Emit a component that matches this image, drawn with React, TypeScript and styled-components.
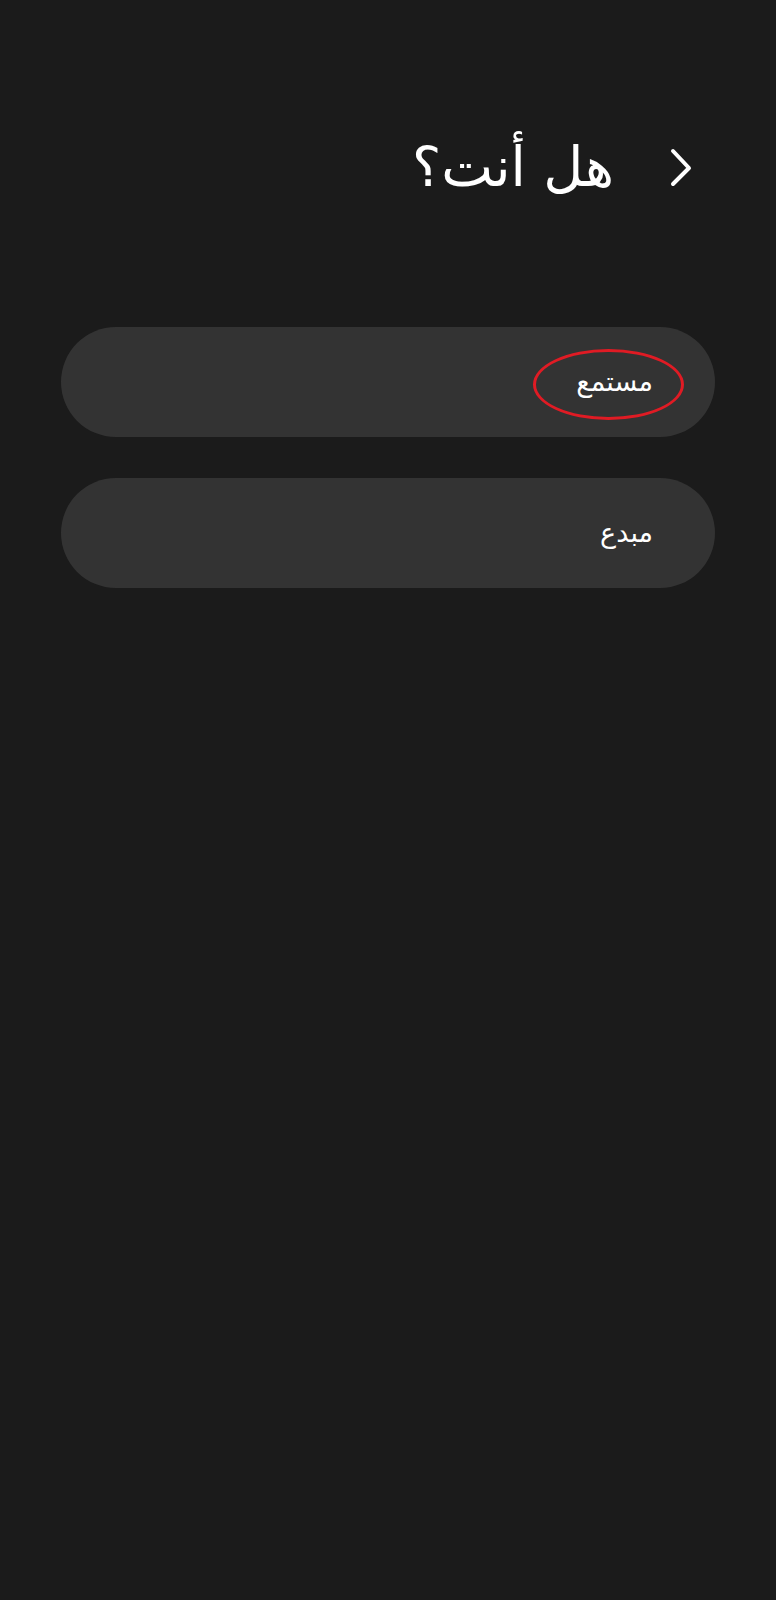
import React from 'react'
import styled, { createGlobalStyle } from 'styled-components'

const GlobalStyle = createGlobalStyle`
  html, body {
    margin: 0;
    padding: 0;
    background: #1b1b1b;
  }
  body {
    font-family: "DejaVu Sans", "Noto Sans", sans-serif;
    color: #ffffff;
  }
`

const options = [
  { id: 'listener', label: 'مستمع', marked: true },
  { id: 'creator', label: 'مبدع', marked: false },
]

const App: React.FC = () => {
  return (
    <>
      <GlobalStyle />
      <Page dir="rtl">
        <Header>
          <BackButton aria-label="رجوع">
            <svg width="26" height="42" viewBox="0 0 26 42" fill="none">
              <path
                d="M5 5 L21 22 L5 38"
                stroke="#ffffff"
                strokeWidth="4"
                strokeLinecap="round"
                strokeLinejoin="round"
              />
            </svg>
          </BackButton>
          <Title>هل أنت؟</Title>
        </Header>
        <Options>
          {options.map((o) => (
            <Option key={o.id}>
              <Label>
                {o.label}
                {o.marked && <Mark />}
              </Label>
            </Option>
          ))}
        </Options>
      </Page>
    </>
  )
}

export default App

const Page = styled.div`
  min-height: 1600px;
  background: #1b1b1b;
  display: flex;
  flex-direction: column;
`

const Header = styled.div`
  display: flex;
  align-items: center;
  gap: 54px;
  padding: 139px 82px 0 0;
  height: 56px;
`

const BackButton = styled.button`
  background: none;
  border: none;
  padding: 0;
  width: 26px;
  height: 42px;
  display: flex;
  cursor: pointer;
`

const Title = styled.h1`
  margin: 0;
  font-size: 55px;
  font-weight: 400;
  line-height: 56px;
  color: #ffffff;
`

const Options = styled.div`
  display: flex;
  flex-direction: column;
  gap: 41px;
  padding: 0 61px;
  margin-top: 132px;
`

const Option = styled.button`
  height: 110px;
  border-radius: 55px;
  border: none;
  background: #333333;
  color: #ffffff;
  display: flex;
  align-items: center;
  padding: 0 62px 0 0;
  cursor: pointer;
  font-family: inherit;
`

const Label = styled.span`
  position: relative;
  font-size: 27px;
  line-height: 30px;
`

const Mark = styled.span`
  position: absolute;
  left: -43px;
  right: -31px;
  top: -18px;
  bottom: -23px;
  border: 3px solid #e01b24;
  border-radius: 50%;
`
